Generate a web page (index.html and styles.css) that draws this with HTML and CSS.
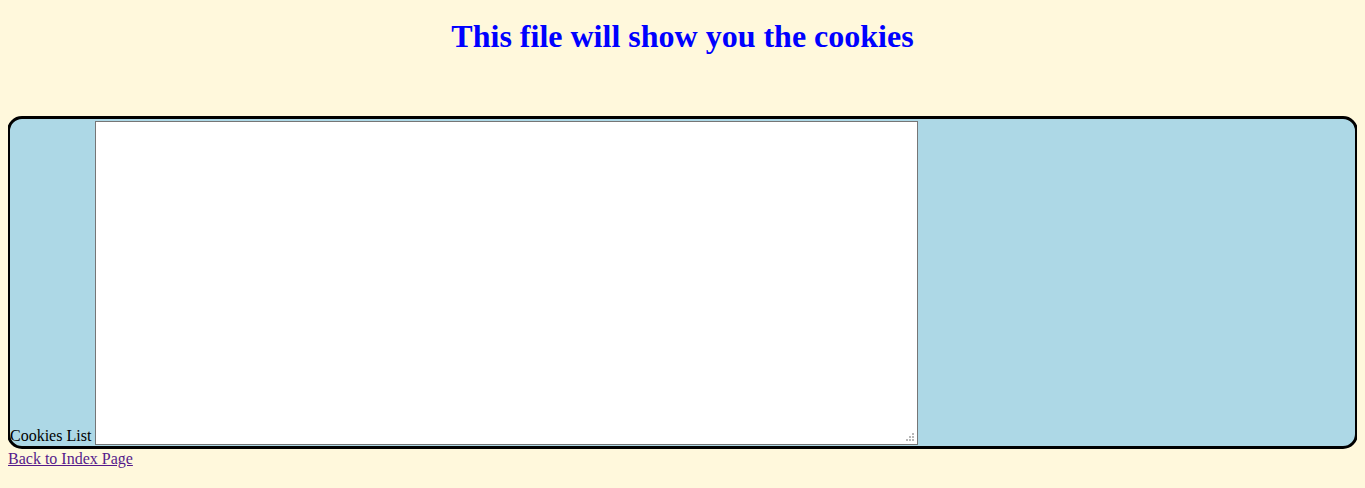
FILE: index.html
```html
<!DOCTYPE html>
<html>
<head>
<meta charset="utf-8">
<title>Cookies</title>
<link rel="stylesheet" href="styles.css">
</head>
<body>
<h1 class="title">This file will show you the cookies</h1>
<div class="panel"><label class="label" for="cookies">Cookies List</label> <span class="area-wrap"><textarea id="cookies" class="cookies"></textarea><svg class="grip" width="8" height="8" viewBox="0 0 8 8"><rect x="6" y="0" width="2" height="2"/><rect x="3" y="3" width="2" height="2"/><rect x="6" y="3" width="2" height="2"/><rect x="0" y="6" width="2" height="2"/><rect x="3" y="6" width="2" height="2"/><rect x="6" y="6" width="2" height="2"/></svg></span></div>
<div class="footer"><a class="back" href="#">Back to Index Page</a></div>
</body>
</html>
```
FILE: styles.css
```css
html, body {
  background: #fff8dc;
}
body {
  margin: 8px;
  font-family: "Liberation Serif", "Times New Roman", serif;
  font-size: 16px;
}
.title {
  color: #0000ff;
  text-align: center;
  font-size: 32px;
  font-weight: bold;
  margin: 10px 0 61px;
}
.panel {
  background: #add8e6;
  border: 3px solid #000;
  border-radius: 15px;
  margin: 0 -1px;
  padding: 0 0 1px;
}
.label {
  color: #000;
}
.area-wrap {
  display: inline-block;
  position: relative;
  vertical-align: bottom;
  margin-top: 2px;
}
.cookies {
  display: block;
  width: 817px;
  height: 318px;
  margin: 0;
  padding: 2px;
  border: 1px solid #767676;
  background: #fff;
  font-family: "Liberation Mono", monospace;
  font-size: 13px;
  box-sizing: content-box;
  resize: none;
}
.grip {
  position: absolute;
  right: 4px;
  bottom: 4px;
  fill: #b8b8b8;
}
.footer {
  padding-top: 1px;
}
.back {
  color: #551a8b;
}
```
